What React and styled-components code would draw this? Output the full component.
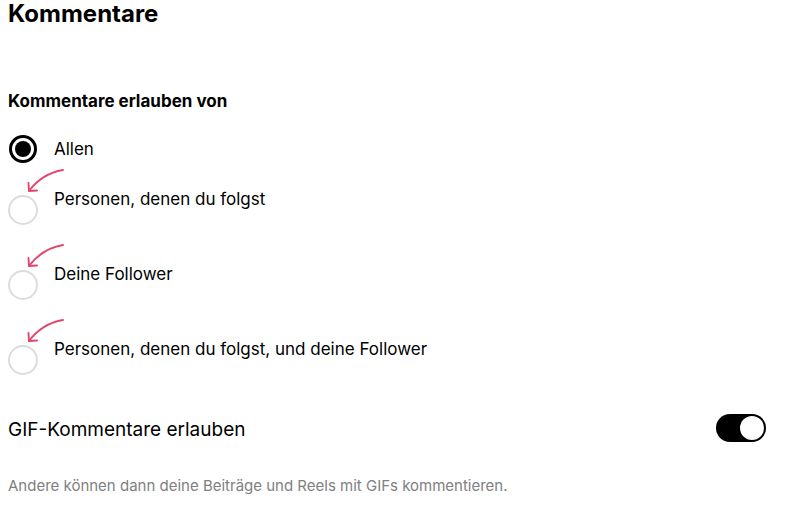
import React, { useState } from 'react';
import styled, { createGlobalStyle } from 'styled-components';

const GlobalStyle = createGlobalStyle`
	body {
		margin: 0;
		background: #fff;
		color: #000;
		font-family: Inter, "Liberation Sans", sans-serif;
		-webkit-font-smoothing: antialiased;
	}
`;

const Page = styled.div`
	padding: 0 34px 0 8px;
`;

const Title = styled.h1`
	margin: 0;
	font-size: 24px;
	line-height: 28px;
	font-weight: 700;
`;

const SectionLabel = styled.h2`
	margin: 62px 0 0;
	font-size: 17px;
	line-height: 22px;
	font-weight: 700;
`;

const OptionList = styled.div`
	display: flex;
	flex-direction: column;
	margin-top: 23px;
`;

const Option = styled.label`
	display: flex;
	align-items: ${props => (props.$checked ? 'center' : 'flex-start')};
	gap: 16px;
	margin-top: ${props => props.$offset}px;
	cursor: pointer;
`;

const Radio = styled.span`
	position: relative;
	flex: none;
	box-sizing: border-box;
	border-radius: 50%;
	${props =>
		props.$checked
			? `
				width: 28px;
				height: 28px;
				margin: 0 1px 0 1px;
				border: 3px solid #000;
			`
			: `
				width: 30px;
				height: 30px;
				margin-top: 7px;
				border: 2px solid #dcdcdc;
			`}

	&::after {
		content: '';
		display: ${props => (props.$checked ? 'block' : 'none')};
		position: absolute;
		top: 3px;
		left: 3px;
		width: 16px;
		height: 16px;
		border-radius: 50%;
		background: #000;
	}
`;

// little hand-drawn arrow pointing at an empty radio
const Pointer = styled.svg`
	position: absolute;
	left: 12px;
	top: -30px;
	width: 46px;
	height: 28px;
	overflow: visible;
	fill: none;
	stroke: #e2466e;
	stroke-width: 1.9px;
	stroke-linecap: round;
	stroke-linejoin: round;
`;

const OptionText = styled.span`
	font-size: 17px;
	line-height: 22px;
`;

const ToggleRow = styled.div`
	display: flex;
	align-items: center;
	justify-content: space-between;
	margin-top: 39px;
`;

const ToggleLabel = styled.span`
	font-size: 19px;
	line-height: 24px;
	padding-top: 3px;
`;

const Switch = styled.button`
	display: flex;
	justify-content: ${props => (props.$on ? 'flex-end' : 'flex-start')};
	box-sizing: border-box;
	width: 50px;
	height: 28px;
	padding: 2px;
	border: 0;
	border-radius: 14px;
	background: ${props => (props.$on ? '#000' : '#dbdbdb')};
	cursor: pointer;
`;

const Knob = styled.span`
	width: 24px;
	height: 24px;
	border-radius: 50%;
	background: #fff;
`;

const Hint = styled.p`
	margin: 34px 0 0;
	font-size: 15px;
	line-height: 20px;
	color: #808080;
`;

const options = [
	{ id: 'all', label: 'Allen', offset: 0 },
	{ id: 'following', label: 'Personen, denen du folgst', offset: 25 },
	{ id: 'followers', label: 'Deine Follower', offset: 38 },
	{ id: 'both', label: 'Personen, denen du folgst, und deine Follower', offset: 38 }
];

const App = () => {
	const [selected, setSelected] = useState('all');
	const [gifs, setGifs] = useState(true);

	return (
		<Page>
			<GlobalStyle />
			<Title>Kommentare</Title>
			<SectionLabel>Kommentare erlauben von</SectionLabel>
			<OptionList>
				{options.map(option => {
					const checked = option.id === selected;
					return (
						<Option
							key={option.id}
							$checked={checked}
							$offset={option.offset}
							onClick={() => setSelected(option.id)}
						>
							<Radio $checked={checked}>
								{!checked && (
									<Pointer viewBox="0 0 46 28">
										<path d="M41 3 C 29 5, 16 12, 7 24" />
										<polyline points="6.5 16 7 24 15 23.5" />
									</Pointer>
								)}
							</Radio>
							<OptionText>{option.label}</OptionText>
						</Option>
					);
				})}
			</OptionList>
			<ToggleRow>
				<ToggleLabel>GIF-Kommentare erlauben</ToggleLabel>
				<Switch $on={gifs} onClick={() => setGifs(!gifs)}>
					<Knob />
				</Switch>
			</ToggleRow>
			<Hint>Andere können dann deine Beiträge und Reels mit GIFs kommentieren.</Hint>
		</Page>
	);
};

export default App;
